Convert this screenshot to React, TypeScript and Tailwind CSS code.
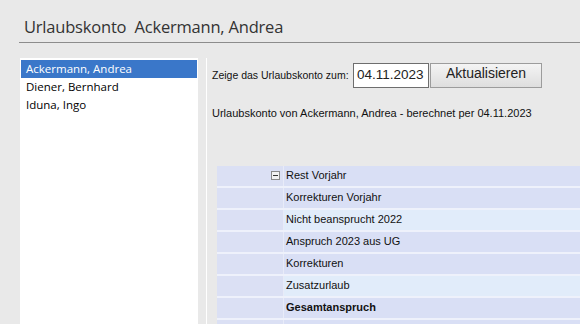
import React from "react";

const employees = ["Ackermann, Andrea", "Diener, Bernhard", "Iduna, Ingo"];

const rows = [
  { label: "Rest Vorjahr", toggle: true },
  { label: "Korrekturen Vorjahr" },
  { label: "Nicht beansprucht 2022" },
  { label: "Anspruch 2023 aus UG" },
  { label: "Korrekturen" },
  { label: "Zusatzurlaub" },
  { label: "Gesamtanspruch", bold: true },
  { label: "" },
];

export default function App() {
  return (
    <div className="w-[580px] h-[324px] overflow-hidden bg-[#e9e9e9] flex flex-col font-['Liberation_Sans',Arial,sans-serif] text-[#111]">
      {/* Kopfzeile */}
      <div className="ml-[19px] h-[43px] border-b border-[#8c8c8c] flex items-end pb-[4px] pl-[5px] shrink-0">
        <span className="font-['Open_Sans',sans-serif] text-[16.5px] leading-[22px] text-[#333] tracking-[-0.2px]">
          Urlaubskonto&nbsp;&nbsp;Ackermann, Andrea
        </span>
      </div>

      <div className="flex flex-1 mt-[15px] min-h-0">
        {/* Mitarbeiterliste */}
        <div className="ml-[20px] w-[178px] bg-white pt-[2px] px-px shrink-0">
          {employees.map((name, i) => (
            <div
              key={name}
              className={
                "h-[18px] pl-[5px] flex items-center font-['Open_Sans',sans-serif] text-[11.5px] " +
                (i === 0 ? "bg-[#3a77c9] text-white" : "text-black")
              }
            >
              {name}
            </div>
          ))}
        </div>

        {/* Trenner */}
        <div className="ml-[8px] w-px bg-[#a3a3a3] border-r border-white shrink-0" />

        {/* Inhalt */}
        <div className="flex-1 min-w-0 pl-[5px] flex flex-col">
          <div className="flex items-center mt-[5px] h-[26px]">
            <span className="text-[10.5px] w-[141px] whitespace-nowrap shrink-0">Zeige das Urlaubskonto zum:</span>
            <div className="w-[76px] h-[25px] shrink-0 bg-white border border-[#6e6e6e] flex items-center pl-[3px] text-[13.5px] text-[#222]">
              04.11.2023
            </div>
            <button className="ml-[1px] w-[112px] h-[25px] shrink-0 border border-[#9c9c9c] bg-gradient-to-b from-[#f4f4f4] to-[#dedede] text-[14px] text-[#222] flex items-center justify-center pb-[4px]">
              Aktualisieren
            </button>
          </div>

          <div className="mt-[17px] text-[11px] whitespace-nowrap">
            Urlaubskonto von Ackermann, Andrea - berechnet per 04.11.2023
          </div>

          {/* Tabelle */}
          <div className="mt-[44px] ml-[5px] flex flex-col">
            {rows.map((r, i) => (
              <div
                key={i}
                className={
                  "h-[22px] flex border-b-2 border-[#eef1fb] " +
                  (i % 3 === 2 ? "bg-[#e1ecfa]" : "bg-[#d9dff5]")
                }
              >
                <div className="w-[66px] shrink-0 flex items-center justify-end pr-[3px] bg-[#dbe0f4]">
                  {r.toggle && (
                    <span className="w-[9px] h-[9px] border border-[#8a8a8a] bg-[#f2f2f2] flex items-center justify-center">
                      <span className="w-[5px] h-px bg-[#333]" />
                    </span>
                  )}
                </div>
                <div
                  className={
                    "flex-1 flex items-center pl-[2px] text-[11px] text-[#111] border-l border-[#e8ebf8] whitespace-nowrap " +
                    (r.bold ? "font-bold" : "")
                  }
                >
                  {r.label}
                </div>
              </div>
            ))}
          </div>
        </div>
      </div>
    </div>
  );
}
